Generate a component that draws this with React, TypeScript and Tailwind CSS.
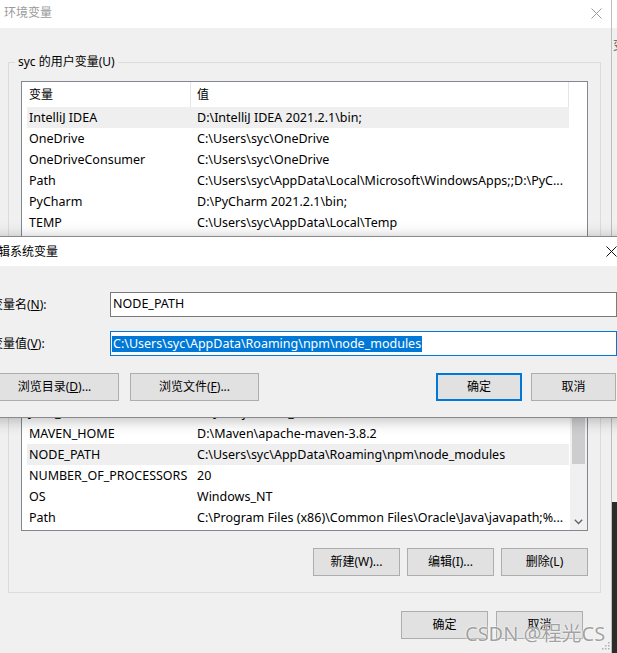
import React from "react";

type Row = [string, string];

const userVars: Row[] = [
  ["IntelliJ IDEA", "D:\\IntelliJ IDEA 2021.2.1\\bin;"],
  ["OneDrive", "C:\\Users\\syc\\OneDrive"],
  ["OneDriveConsumer", "C:\\Users\\syc\\OneDrive"],
  ["Path", "C:\\Users\\syc\\AppData\\Local\\Microsoft\\WindowsApps;;D:\\PyC..."],
  ["PyCharm", "D:\\PyCharm 2021.2.1\\bin;"],
  ["TEMP", "C:\\Users\\syc\\AppData\\Local\\Temp"],
  ["TMP", "C:\\Users\\syc\\AppData\\Local\\Temp"],
];

const sysVars: Row[] = [
  ["ComSpec", "C:\\Windows\\system32\\cmd.exe"],
  ["DriverData", "C:\\Windows\\System32\\Drivers\\DriverData"],
  ["JAVA_HOME", "D:\\Java\\jdk1.8.0_301"],
  ["MAVEN_HOME", "D:\\Maven\\apache-maven-3.8.2"],
  ["NODE_PATH", "C:\\Users\\syc\\AppData\\Roaming\\npm\\node_modules"],
  ["NUMBER_OF_PROCESSORS", "20"],
  ["OS", "Windows_NT"],
  ["Path", "C:\\Program Files (x86)\\Common Files\\Oracle\\Java\\javapath;%..."],
];

function Header() {
  return (
    <div className="flex h-[25px] shrink-0 bg-white text-black">
      <div className="flex w-[169px] shrink-0 items-center border-r border-[#e5e5e5] pl-[7px]">变量</div>
      <div className="flex w-[378px] shrink-0 items-center border-r border-[#e5e5e5] pl-[6px]">值</div>
    </div>
  );
}

function VarRow({ name, value, selected }: { name: string; value: string; selected?: boolean }) {
  return (
    <div
      className={
        "ml-[5px] flex h-[21px] w-[542px] shrink-0 items-center whitespace-nowrap pt-[2px] text-[12.5px] " +
        (selected ? "bg-[#efefef]" : "")
      }
    >
      <div className="w-[164px] shrink-0 overflow-hidden pl-[2px]">{name}</div>
      <div className="min-w-0 flex-1 overflow-hidden pl-[6px]">{value}</div>
    </div>
  );
}

function Btn({ children, w, def }: { children: React.ReactNode; w: string; def?: boolean }) {
  return (
    <div
      className={
        "flex h-[28px] shrink-0 items-center justify-center bg-[#e1e1e1] " +
        w +
        " " +
        (def ? "border-2 border-[#0078d7]" : "border border-[#adadad]")
      }
    >
      {children}
    </div>
  );
}

function CloseX({ color }: { color: string }) {
  return (
    <svg width="11" height="11" viewBox="0 0 11 11" className="shrink-0">
      <path d="M0.5 0.5 L10.5 10.5 M10.5 0.5 L0.5 10.5" stroke={color} strokeWidth="1" fill="none" />
    </svg>
  );
}

export default function App() {
  return (
    <div className="relative h-[653px] w-[617px] overflow-hidden bg-[#f0f0f0] font-['Noto_Sans','Noto_Sans_CJK_SC',sans-serif] text-[12px] text-black">
      {/* neighbouring window at the right edge */}
      <div className="absolute left-[612px] top-0 flex h-[653px] w-[5px] flex-col overflow-hidden bg-[#f0f0f0]">
        <div className="h-[28px] shrink-0 bg-white" />
        <div className="ml-[1px] mt-[11px] h-[14px] shrink-0 text-[12px] leading-[14px] text-[#555]">变</div>
        <div className="flex-1" />
        <div className="h-[151px] shrink-0 bg-[#2b2b2b]" />
      </div>

      {/* main window: 环境变量 */}
      <div className="absolute left-0 top-0 flex h-[653px] w-[612px] flex-col border-r border-[#bdbdbd] bg-[#f0f0f0]">
        <div className="flex h-[28px] shrink-0 items-center justify-between bg-white pb-[3px] pl-[4px] pr-[9px]">
          <span className="text-[#9a9a9a]">环境变量</span>
          <div className="mt-[1px]">
            <CloseX color="#9a9a9a" />
          </div>
        </div>

        <div className="flex flex-col pl-[8px] pt-[34px]">
          {/* user variables group */}
          <div className="relative flex w-[593px] flex-col border border-[#dcdcdc] pb-[16px] pl-[12px] pt-[18px]">
            <span className="absolute left-[6px] top-[-9px] bg-[#f0f0f0] px-[3px] leading-[16px]">syc 的用户变量(U)</span>
            <div className="flex h-[190px] w-[567px] flex-col overflow-hidden border border-[#828790] bg-white">
              <Header />
              {userVars.map((r, i) => (
                <VarRow key={r[0]} name={r[0]} value={r[1]} selected={i === 0} />
              ))}
            </div>
            <div className="mt-[17px] flex w-[567px] justify-end gap-[7px]">
              <Btn w="w-[87px]">新建(N)...</Btn>
              <Btn w="w-[87px]">编辑(E)...</Btn>
              <Btn w="w-[87px]">删除(D)</Btn>
            </div>
          </div>

          {/* system variables group */}
          <div className="relative mt-[17px] flex w-[593px] flex-col border border-[#dcdcdc] pb-[16px] pl-[12px] pt-[18px]">
            <span className="absolute left-[6px] top-[-9px] bg-[#f0f0f0] px-[3px] leading-[16px]">系统变量(S)</span>
            <div className="flex h-[162px] w-[567px] overflow-hidden border border-[#828790] bg-white">
              <div className="flex w-[548px] shrink-0 flex-col">
                <Header />
                <div className="flex min-h-0 flex-1 flex-col justify-end overflow-hidden pb-[2px]">
                  {sysVars.map((r) => (
                    <VarRow key={r[0]} name={r[0]} value={r[1]} selected={r[0] === "NODE_PATH"} />
                  ))}
                </div>
              </div>
              <div className="flex w-[17px] shrink-0 flex-col bg-[#f0f0f0]">
                <div className="h-[17px] shrink-0" />
                <div className="mx-[2px] mt-[30px] h-[47px] shrink-0 bg-[#cdcdcd]" />
                <div className="flex-1" />
                <div className="flex h-[17px] shrink-0 items-center justify-center">
                  <svg width="9" height="6" viewBox="0 0 9 6">
                    <path d="M0.8 0.8 L4.5 4.5 L8.2 0.8" stroke="#606060" strokeWidth="1.3" fill="none" />
                  </svg>
                </div>
              </div>
            </div>
            <div className="mt-[17px] flex w-[567px] justify-end gap-[7px]">
              <Btn w="w-[87px]">新建(W)...</Btn>
              <Btn w="w-[87px]">编辑(I)...</Btn>
              <Btn w="w-[87px]">删除(L)</Btn>
            </div>
          </div>

          {/* main OK / Cancel */}
          <div className="mt-[18px] flex w-[575px] justify-end gap-[8px]">
            <Btn w="w-[87px]">确定</Btn>
            <Btn w="w-[87px]">取消</Btn>
          </div>
        </div>

        {/* resize grip */}
        <svg width="10" height="10" viewBox="0 0 10 10" className="absolute bottom-[1px] right-[1px]">
          <g fill="#b0b0b0">
            <rect x="8" y="0" width="1.5" height="1.5" />
            <rect x="5" y="3" width="1.5" height="1.5" />
            <rect x="8" y="3" width="1.5" height="1.5" />
            <rect x="2" y="6" width="1.5" height="1.5" />
            <rect x="5" y="6" width="1.5" height="1.5" />
            <rect x="8" y="6" width="1.5" height="1.5" />
          </g>
        </svg>
      </div>

      {/* edit dialog: 编辑系统变量 */}
      <div className="absolute left-[-20px] top-[236px] flex w-[660px] flex-col border border-[#8a8a8a] bg-[#f0f0f0] shadow-[0_2px_14px_rgba(0,0,0,0.28)]">
        <div className="flex h-[29px] shrink-0 items-center justify-between bg-white pl-[5px] pr-[22px]">
          <span>编辑系统变量</span>
          <CloseX color="#111" />
        </div>
        <div className="flex flex-col pb-[16px] pt-[26px]">
          <div className="flex items-center">
            <div className="w-[129px] shrink-0 pl-[10px]">
              变量名(<span className="underline">N</span>):
            </div>
            <div className="flex h-[25px] w-[507px] shrink-0 items-center border border-[#7a7a7a] bg-white pl-[2px] text-[12.5px]">
              NODE_PATH
            </div>
          </div>
          <div className="mt-[14px] flex items-center">
            <div className="w-[129px] shrink-0 pl-[10px]">
              变量值(<span className="underline">V</span>):
            </div>
            <div className="flex h-[25px] w-[507px] shrink-0 items-center border border-[#0078d7] bg-white pl-[1px] text-[12.5px]">
              <span className="bg-[#0078d7] px-[1px] leading-[16px] text-white">
                C:\Users\syc\AppData\Roaming\npm\node_modules
              </span>
            </div>
          </div>
          <div className="mt-[17px] flex pl-[9px]">
            <Btn w="w-[129px]">
              <span>
                浏览目录(<span className="underline">D</span>)...
              </span>
            </Btn>
            <div className="ml-[11px]">
              <Btn w="w-[129px]">
                <span>
                  浏览文件(<span className="underline">F</span>)...
                </span>
              </Btn>
            </div>
            <div className="ml-[177px]">
              <Btn w="w-[86px]" def>
                确定
              </Btn>
            </div>
            <div className="ml-[9px]">
              <Btn w="w-[85px]">取消</Btn>
            </div>
          </div>
        </div>
      </div>

      {/* watermark */}
      <div className="pointer-events-none absolute left-[465px] top-[623px] whitespace-nowrap text-[20px] leading-[22px] text-[rgba(120,120,120,0.7)] [text-shadow:0_0_1px_#fff,0_0_2px_#fff]">
        CSDN @程光CS
      </div>
    </div>
  );
}
